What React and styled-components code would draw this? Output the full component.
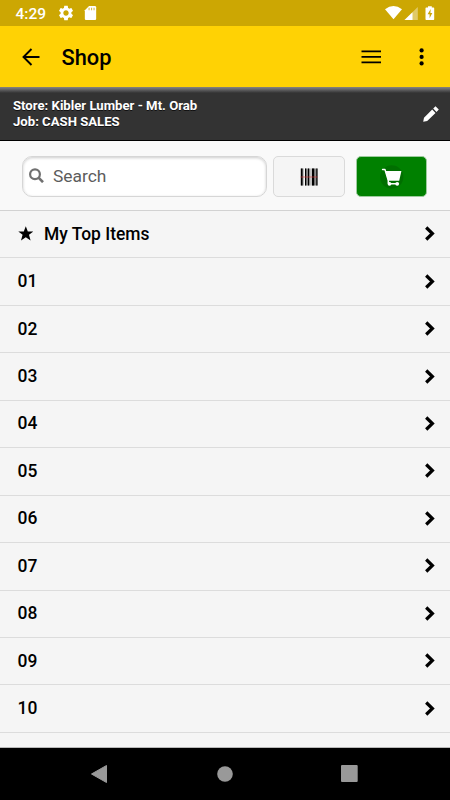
import React from "react";
import styled, { createGlobalStyle } from "styled-components";

const YELLOW = "#ffd204";
const DARK_YELLOW = "#cca703";
const LINE = "#dcdcdc";

const ITEMS = ["01", "02", "03", "04", "05", "06", "07", "08", "09", "10"];

const GlobalStyle = createGlobalStyle`
  * {
    box-sizing: border-box;
  }

  body {
    margin: 0;
    font-family: Roboto, "Liberation Sans", sans-serif;
    color: #000;
  }

  svg {
    display: block;
    flex: none;
  }
`;

const Screen = styled.div`
  width: 450px;
  height: 800px;
  display: flex;
  flex-direction: column;
  overflow: hidden;
  background: #f5f5f5;
`;

const StatusBar = styled.div`
  height: 26px;
  flex: none;
  display: flex;
  align-items: center;
  padding: 0 14px 0 15.5px;
  background: ${DARK_YELLOW};
  color: #fff;
`;

const Clock = styled.span`
  width: 41px;
  padding-top: 2px;
  font-size: 15.5px;
  font-weight: 500;
  line-height: 20px;
`;

const StatusIcons = styled.div`
  display: flex;
  flex: 1;
  gap: 7px;
`;

const AppBar = styled.header`
  height: 61px;
  flex: none;
  display: flex;
  align-items: center;
  padding: 0 16px 0 20px;
  background: ${YELLOW};
`;

const Title = styled.h1`
  flex: 1;
  margin: 0 0 0 19.5px;
  padding-top: 3px;
  font-size: 21.8px;
  font-weight: 500;
  line-height: 28px;
`;

const MenuIcon = styled.svg`
  margin-right: 28px;
`;

const StoreBar = styled.div`
  height: 54px;
  flex: none;
  display: flex;
  justify-content: space-between;
  padding: 11px 10px 0 13px;
  border-bottom: 1px solid #000;
  background: linear-gradient(#8a8478 0, #77777a 1px, #5c5c5e 3px, #333 6px);
  color: #fff;
  font-size: 13.15px;
  font-weight: 700;
  line-height: 16px;
`;

const StoreText = styled.div`
  text-shadow: 0 1px 0 #111;
`;

const PencilIcon = styled.svg`
  margin-top: 7px;
`;

const SearchBar = styled.div`
  height: 70px;
  flex: none;
  display: flex;
  align-items: flex-start;
  padding: 15px 23px 0 22px;
  border-bottom: 1px solid #d2d2d2;
  background: #f9f9f9;
`;

const SearchField = styled.div`
  width: 245px;
  height: 41px;
  display: flex;
  align-items: center;
  padding: 0 0 2px 5.5px;
  border: 1px solid #d6d6d6;
  border-radius: 10px;
  background: #fff;
  box-shadow: inset 0 1px 3px rgba(0, 0, 0, 0.2);
  color: #5c5c5c;
  font-size: 17.4px;
`;

const Placeholder = styled.span`
  margin-left: 9.5px;
`;

const IconButton = styled.button`
  width: ${({ $width }) => $width}px;
  height: 41px;
  display: flex;
  align-items: center;
  justify-content: center;
  margin: 0 0 0 ${({ $gap }) => $gap}px;
  padding: 1px 0 0;
  border: 1px solid ${({ $border }) => $border};
  border-radius: 5px;
  background: ${({ $background }) => $background};
`;

const List = styled.ul`
  flex: 1;
  margin: 0;
  padding: 0;
  overflow: hidden;
  list-style: none;
  border-bottom: 1px solid #b9b9b9;
`;

const Row = styled.li`
  height: 47.45px;
  display: flex;
  align-items: center;
  padding: 0 15px 1px 17.5px;
  border-bottom: 1px solid ${LINE};
  font-size: 17.45px;
  font-weight: 500;
`;

const Label = styled.span`
  flex: 1;
`;

const StarIcon = styled.svg`
  margin-right: 11px;
`;

const NavBar = styled.nav`
  height: 52px;
  flex: none;
  display: flex;
  align-items: center;
  justify-content: space-between;
  padding: 0 92px 1px 91px;
  background: #000;
`;

const Chevron = () => (
  <svg width="11" height="15" viewBox="0 0 11 15">
    <path
      d="M2.2 1.5L8.4 7.5L2.2 13.5"
      fill="none"
      stroke="#000"
      strokeWidth="3.2"
    />
  </svg>
);

const ItemRow = ({ label, icon }) => (
  <Row>
    {icon}
    <Label>{label}</Label>
    <Chevron />
  </Row>
);

const Star = () => (
  <StarIcon width="15.5" height="15" viewBox="0 0 15.5 15">
    <path d="M7.8 .2L9.8 5.4H15.3L11 8.8L12.6 14.4L7.8 11.200L3 14.400L4.600 8.800L.3 5.400H5.800Z" />
  </StarIcon>
);

const Barcode = () => (
  <svg width="18" height="18" viewBox="0 0 18 18">
    <path
      d="M.5 .5h3v17h-3zM5 .5h5.500v17H5zM11.500 .5h6v17h-6z"
      fill="#8c8c8c"
    />
    <path d="M1 .5h1.500v17H1zM5 .5h1.200v17H5zM8 .5h1v17H8zM12 .5h2.200v17H12zM16.300 .5h1.200v17h-1.200z" />
    <path d="M.5 8.500h17v1H.5z" fill="#d33" fillOpacity=".6" />
  </svg>
);

const Cart = () => (
  <svg width="24" height="24" viewBox="0 0 24 24">
    <circle cx="11.700" cy="12" r="11.700" fill="#006f00" />
    <path
      d="M2.600 4.600H5L8.300 15.500V18M9 18.700H17.500"
      fill="none"
      stroke="#fff"
      strokeWidth="1.500"
      strokeLinecap="round"
      strokeLinejoin="round"
    />
    <path d="M5.200 6H21.400L19.200 15.800H8.200Z" fill="#fff" />
    <circle cx="9.500" cy="18.800" r="1.900" fill="#fff" />
    <circle cx="17.200" cy="18.800" r="1.900" fill="#fff" />
  </svg>
);

const App = () => (
  <>
    <GlobalStyle />
    <Screen>
      <StatusBar>
        <Clock>4:29</Clock>
        <StatusIcons>
          <svg width="18" height="18" viewBox="0 0 24 24" fill="#fff">
            <path d="M19.14 12.94c.04-.3.06-.61.06-.94 0-.32-.02-.64-.07-.94l2.03-1.58c.18-.14.23-.41.12-.61l-1.92-3.32c-.12-.22-.37-.29-.59-.22l-2.39.96c-.5-.38-1.03-.7-1.62-.94l-.36-2.54c-.04-.24-.24-.41-.48-.41h-3.84c-.24 0-.43.17-.47.41l-.36 2.54c-.59.24-1.13.57-1.62.94l-2.39-.96c-.22-.08-.47 0-.59.22L2.74 8.87c-.12.21-.08.47.12.61l2.03 1.58c-.05.3-.09.63-.09.94s.02.64.07.94l-2.03 1.58c-.18.14-.23.41-.12.61l1.92 3.32c.12.22.37.29.59.22l2.39-.96c.5.38 1.03.7 1.62.94l.36 2.54c.05.24.24.41.48.41h3.84c.24 0 .44-.17.47-.41l.36-2.54c.59-.24 1.13-.56 1.62-.94l2.39.96c.22.08.47 0 .59-.22l1.92-3.32c.12-.22.07-.47-.12-.61l-2.01-1.58zM12 15.6c-1.98 0-3.6-1.62-3.6-3.6s1.62-3.6 3.6-3.6 3.6 1.62 3.6 3.6-1.62 3.6-3.6 3.6z" />
          </svg>
          <svg width="17" height="18" viewBox="0 0 24 24" fill="#fff">
            <path d="M18 2h-8L4 8v12c0 1.1.9 2 2 2h12c1.1 0 2-.9 2-2V4c0-1.1-.9-2-2-2z" />
            <path
              d="M10 4.5v3.5M13.500 4.500v3.500M17 4.500v3.500"
              stroke={DARK_YELLOW}
              strokeWidth="1.500"
              strokeOpacity=".75"
            />
          </svg>
        </StatusIcons>
        <svg width="51" height="16" viewBox="0 0 51 16" fill="#fff">
          <path d="M0 4.200Q8.500-2.200 17 4.200L8.500 14.300Z" />
          <path d="M32.800 2V15H19.500Z" fillOpacity=".4" />
          <path d="M27.500 7.200V15H19.500Z" />
          <path d="M43 1.200V2.500H41.200q-.700 0-.700.700V14.300q0 .700.700.700h7.300q.700 0 .700-.700V3.200q0-.700-.700-.700H46.800V1.200Z" />
          <path
            d="M45.700 4L42.600 9.300H44.600V13.200L47.300 7.900H45.400Z"
            fill={DARK_YELLOW}
          />
        </svg>
      </StatusBar>
      <AppBar>
        <svg width="22" height="22" viewBox="0 0 22 22">
          <path
            d="M19.500 11H3.800M11.500 3L3.500 11L11.500 19"
            fill="none"
            stroke="#000"
            strokeWidth="1.900"
          />
        </svg>
        <Title>Shop</Title>
        <MenuIcon width="20" height="14" viewBox="0 0 20 14">
          <path d="M.5 .5H20V2.300H.5zM.5 6H20V7.800H.5zM.5 11.500H20V13.300H.5z" />
        </MenuIcon>
        <svg width="25" height="18" viewBox="0 0 25 18">
          <circle cx="12.600" cy="2.400" r="2.100" />
          <circle cx="12.600" cy="8.900" r="2.100" />
          <circle cx="12.600" cy="15.400" r="2.100" />
        </svg>
      </AppBar>
      <StoreBar>
        <StoreText>
          <div>Store: Kibler Lumber - Mt. Orab</div>
          <div>Job: CASH SALES</div>
        </StoreText>
        <PencilIcon width="18" height="18" viewBox="0 0 18 18">
          <path
            d="M1.200 16.800L2 12.800L10.200 4.600L13.500 7.900L5.200 16ZM11.200 3.600L13.500 1.300L16.800 4.600L14.500 6.900Z"
            fill="#fff"
          />
        </PencilIcon>
      </StoreBar>
      <SearchBar>
        <SearchField>
          <svg width="15" height="15" viewBox="0 0 15 15">
            <g fill="none" stroke="#707070" strokeWidth="2.200">
              <circle cx="6" cy="6.200" r="4.900" />
              <path d="M9.500 9.700L14 14.200" strokeWidth="2.600" />
            </g>
          </svg>
          <Placeholder>Search</Placeholder>
        </SearchField>
        <IconButton
          aria-label="Scan barcode"
          $width={72}
          $gap={5.5}
          $border="#dadada"
          $background="#f5f5f5"
        >
          <Barcode />
        </IconButton>
        <IconButton
          aria-label="Cart"
          $width={71}
          $gap={11.5}
          $border="#9ecb9e"
          $background="#008000"
        >
          <Cart />
        </IconButton>
      </SearchBar>
      <List>
        <ItemRow label="My Top Items" icon={<Star />} />
        {ITEMS.map(item => (
          <ItemRow key={item} label={item} />
        ))}
      </List>
      <NavBar>
        <svg width="16" height="18" viewBox="0 0 16 18">
          <path
            d="M15.500 .5V17.500L.5 9Z"
            fill="#999"
            stroke="#999"
            strokeLinejoin="round"
          />
        </svg>
        <svg width="17" height="16" viewBox="0 0 17 16">
          <circle cx="9" cy="8" r="7.800" fill="#999" />
        </svg>
        <svg width="17" height="17" viewBox="0 0 17 17">
          <rect width="16.700" height="17" rx="1" fill="#999" />
        </svg>
      </NavBar>
    </Screen>
  </>
);

export default App;
